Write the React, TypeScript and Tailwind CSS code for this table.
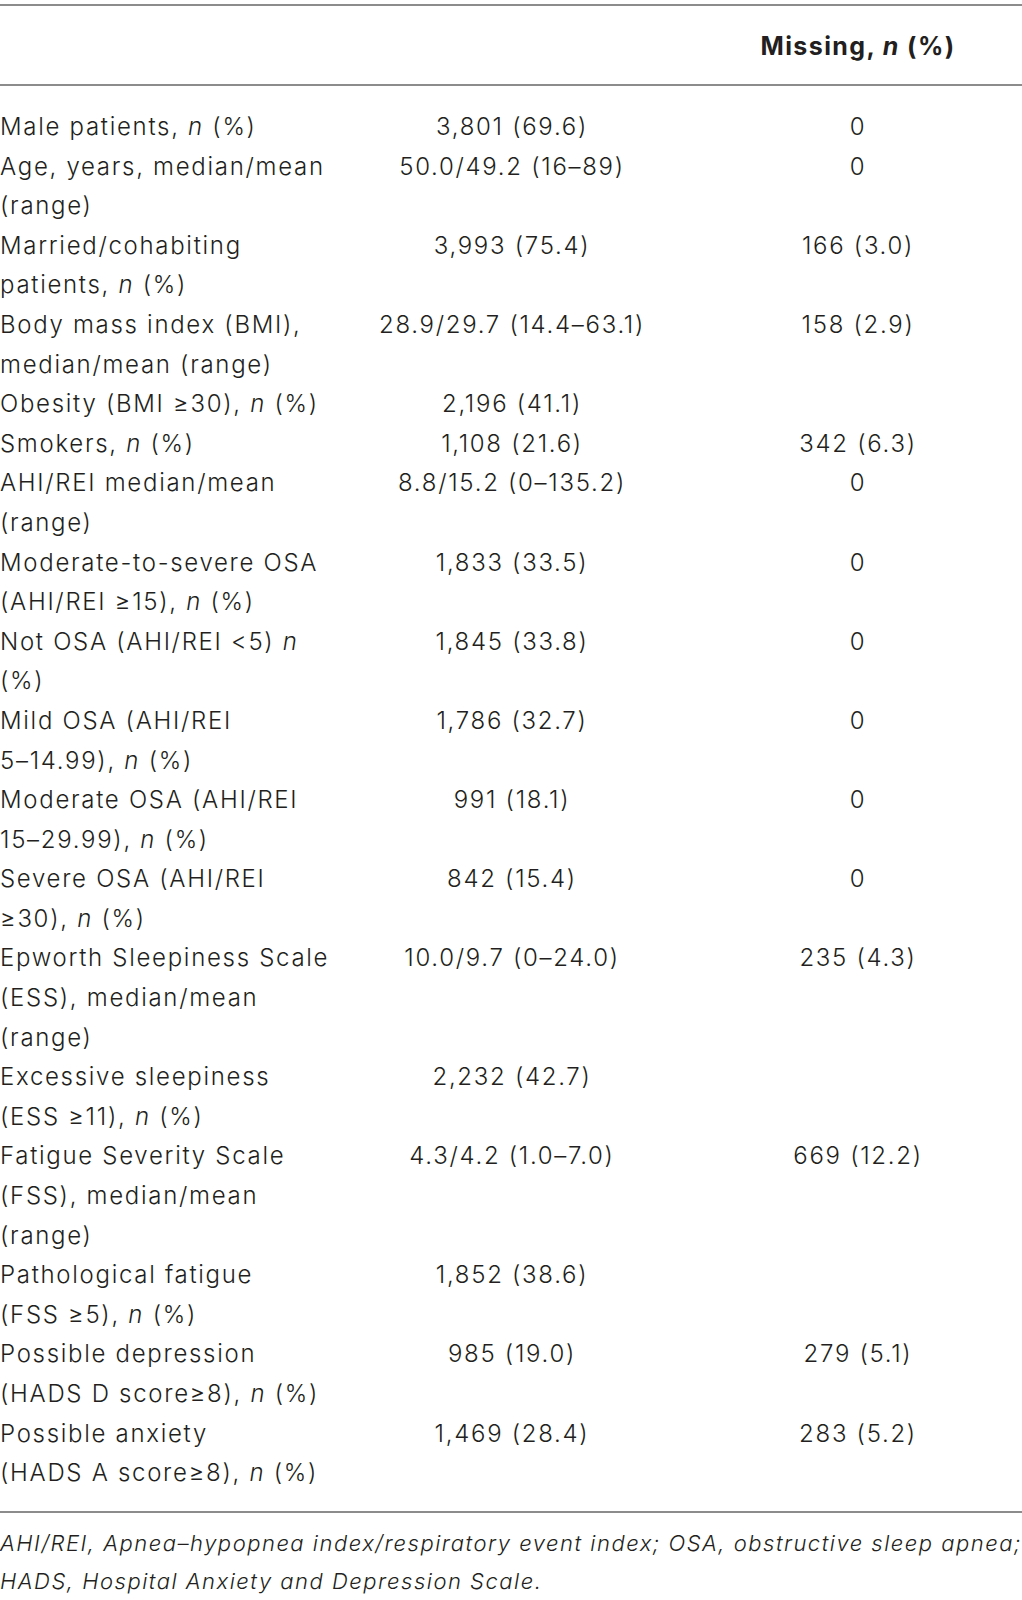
import React from 'react';

type Row = {
    label: React.ReactNode[];
    value: string;
    missing: string;
};

const N = () => <i>n</i>;

const rows: Row[] = [
    { label: [<>Male patients, <N /> (%)</>], value: '3,801 (69.6)', missing: '0' },
    { label: ['Age, years, median/mean', '(range)'], value: '50.0/49.2 (16–89)', missing: '0' },
    { label: ['Married/cohabiting', <>patients, <N /> (%)</>], value: '3,993 (75.4)', missing: '166 (3.0)' },
    { label: ['Body mass index (BMI),', 'median/mean (range)'], value: '28.9/29.7 (14.4–63.1)', missing: '158 (2.9)' },
    { label: [<>Obesity (BMI ≥30), <N /> (%)</>], value: '2,196 (41.1)', missing: '' },
    { label: [<>Smokers, <N /> (%)</>], value: '1,108 (21.6)', missing: '342 (6.3)' },
    { label: ['AHI/REI median/mean', '(range)'], value: '8.8/15.2 (0–135.2)', missing: '0' },
    { label: ['Moderate-to-severe OSA', <>(AHI/REI ≥15), <N /> (%)</>], value: '1,833 (33.5)', missing: '0' },
    { label: [<>Not OSA (AHI/REI &lt;5) <N /></>, '(%)'], value: '1,845 (33.8)', missing: '0' },
    { label: ['Mild OSA (AHI/REI', <>5–14.99), <N /> (%)</>], value: '1,786 (32.7)', missing: '0' },
    { label: ['Moderate OSA (AHI/REI', <>15–29.99), <N /> (%)</>], value: '991 (18.1)', missing: '0' },
    { label: ['Severe OSA (AHI/REI', <>≥30), <N /> (%)</>], value: '842 (15.4)', missing: '0' },
    { label: ['Epworth Sleepiness Scale', '(ESS), median/mean', '(range)'], value: '10.0/9.7 (0–24.0)', missing: '235 (4.3)' },
    { label: ['Excessive sleepiness', <>(ESS ≥11), <N /> (%)</>], value: '2,232 (42.7)', missing: '' },
    { label: ['Fatigue Severity Scale', '(FSS), median/mean', '(range)'], value: '4.3/4.2 (1.0–7.0)', missing: '669 (12.2)' },
    { label: ['Pathological fatigue', <>(FSS ≥5), <N /> (%)</>], value: '1,852 (38.6)', missing: '' },
    { label: ['Possible depression', <>(HADS D score≥8), <N /> (%)</>], value: '985 (19.0)', missing: '279 (5.1)' },
    { label: ['Possible anxiety', <>(HADS A score≥8), <N /> (%)</>], value: '1,469 (28.4)', missing: '283 (5.2)' },
];

export default function App() {
    return (
        <div className="w-[1022px] bg-white pt-[4px] text-[#231f20]" style={{ fontFamily: 'Inter, "Liberation Sans", Arial, sans-serif' }}>
            <div className="border-t-2 border-[#8c8c8c]" />

            {/* Header */}
            <div className="flex h-[80px] items-center border-b-2 border-[#8c8c8c] pt-[4px] text-[25px]">
                <div className="w-[330px]" />
                <div className="w-[364px]" />
                <div className="w-[328px] text-center font-bold tracking-[1.4px] whitespace-nowrap">
                    Missing, <i>n</i> (%)
                </div>
            </div>

            {/* Body */}
            <div className="pt-[21px] pb-[18px] text-[24px] leading-[39.6px] font-light tracking-[1.7px]">
                {rows.map((row, i) => (
                    <div key={i} className="flex">
                        <div className="w-[330px] whitespace-nowrap">
                            {row.label.map((line, j) => (
                                <div key={j}>{line}</div>
                            ))}
                        </div>
                        <div className="w-[364px] text-center whitespace-nowrap">{row.value}</div>
                        <div className="w-[328px] text-center whitespace-nowrap">{row.missing}</div>
                    </div>
                ))}
            </div>

            <div className="border-t-2 border-[#8c8c8c]" />

            {/* Footnote */}
            <div className="pt-[11px] text-[22px] leading-[38px] italic font-light whitespace-nowrap tracking-[1.5px]">
                <div>AHI/REI, Apnea–hypopnea index/respiratory event index; OSA, obstructive sleep apnea;</div>
                <div>HADS, Hospital Anxiety and Depression Scale.</div>
            </div>
        </div>
    );
}
